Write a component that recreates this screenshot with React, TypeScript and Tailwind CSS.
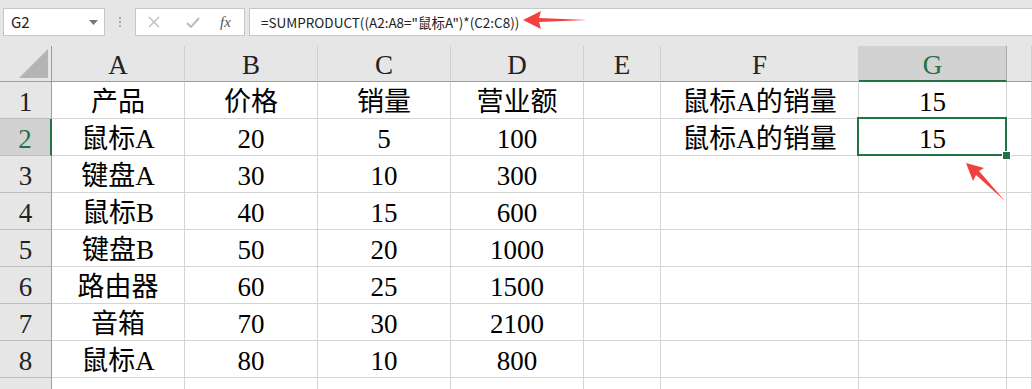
import React from 'react';

const cols = ['A', 'B', 'C', 'D', 'E', 'F', 'G', ''];

const rows: string[][] = [
  ['产品', '价格', '销量', '营业额', '', '鼠标A的销量', '15', ''],
  ['鼠标A', '20', '5', '100', '', '鼠标A的销量', '15', ''],
  ['键盘A', '30', '10', '300', '', '', '', ''],
  ['鼠标B', '40', '15', '600', '', '', '', ''],
  ['键盘B', '50', '20', '1000', '', '', '', ''],
  ['路由器', '60', '25', '1500', '', '', '', ''],
  ['音箱', '70', '30', '2100', '', '', '', ''],
  ['鼠标A', '80', '10', '800', '', '', '', ''],
  ['', '', '', '', '', '', '', ''],
];

const cellFont = { fontFamily: '"Liberation Serif", "Noto Sans CJK SC", serif' };

function FormulaBar() {
  return (
    <div className="flex h-[46px] items-start bg-[#e6e6e6] pt-[8px]">
      <div className="ml-[3px] flex h-[28px] w-[102px] items-center justify-between border border-[#c6c6c6] bg-white pl-[7px] pr-[6px]">
        <span className="text-[15px] text-[#222]" style={{ fontFamily: '"Noto Sans CJK SC", sans-serif' }}>G2</span>
        <svg width="9" height="5" viewBox="0 0 9 5"><path d="M0 0h9L4.5 5z" fill="#777" /></svg>
      </div>
      <div className="flex h-[28px] w-[30px] flex-col items-center justify-center gap-[2px]">
        <span className="h-[2px] w-[2px] bg-[#aaa]" />
        <span className="h-[2px] w-[2px] bg-[#aaa]" />
        <span className="h-[2px] w-[2px] bg-[#aaa]" />
      </div>
      <div className="flex h-[28px] w-[110px] items-center border border-[#c6c6c6] bg-white">
        <svg className="ml-[12px]" width="12" height="12" viewBox="0 0 12 12">
          <path d="M1 1l10 10M11 1L1 11" stroke="#bdbdbd" strokeWidth="1.4" />
        </svg>
        <svg className="ml-[26px]" width="14" height="11" viewBox="0 0 14 11">
          <path d="M1 6l4 4 8-9" stroke="#bdbdbd" strokeWidth="2" fill="none" />
        </svg>
        <span className="ml-[20px] text-[15px] italic text-[#555]" style={{ fontFamily: '"Liberation Serif", serif' }}>fx</span>
      </div>
      <div className="ml-[4px] flex h-[28px] flex-1 items-center border border-r-0 border-[#c6c6c6] bg-white pl-[11px]">
        <span className="text-[13.5px] text-[#222]" style={{ fontFamily: '"Noto Sans CJK SC", sans-serif' }}>
          =SUMPRODUCT((A2:A8="鼠标A")*(C2:C8))
        </span>
      </div>
    </div>
  );
}

export default function App() {
  return (
    <div className="relative h-[389px] w-[1032px] overflow-hidden bg-white">
      <FormulaBar />
      <div className="grid grid-cols-[52px_133px_133px_133px_133px_77px_198px_148px_1fr] grid-rows-[36px_repeat(9,37px)]" style={cellFont}>
        {/* corner */}
        <div className="flex items-end justify-end border-r border-b border-[#9e9e9e] bg-[#e6e6e6] pr-[3px] pb-[3px]">
          <svg width="29" height="29" viewBox="0 0 29 29"><path d="M29 0v29H0z" fill="#b4b4b4" /></svg>
        </div>
        {cols.map((c, k) => (
          <div
            key={k}
            className={
              c === 'G'
                ? 'flex items-center justify-center border-r border-b-2 border-r-[#ababab] border-b-[#217346] bg-[#d2d2d2] pt-[4px] text-[27px] leading-none text-[#217346]'
                : 'flex items-center justify-center border-r border-b border-r-[#d0d0d0] border-b-[#9e9e9e] bg-[#e6e6e6] pt-[4px] text-[27px] leading-none text-[#222]'
            }
          >
            {c}
          </div>
        ))}
        {rows.map((r, i) => (
          <React.Fragment key={i}>
            <div
              className={
                i === 1
                  ? 'flex items-center justify-center border-r-2 border-b border-r-[#217346] border-b-[#bdbdbd] bg-[#d2d2d2] pt-[4px] text-[27px] leading-none text-[#217346]'
                  : 'flex items-center justify-center border-r border-b border-r-[#9e9e9e] border-b-[#bdbdbd] bg-[#e6e6e6] pt-[4px] text-[27px] leading-none text-[#222]'
              }
            >
              {i < 8 ? i + 1 : ''}
            </div>
            {r.map((v, j) => (
              <div
                key={j}
                className={
                  i === 1 && j === 6
                    ? 'relative z-10 flex items-center justify-center border-r border-b border-[#d4d4d4] pt-[4px] text-[27px] leading-none text-black'
                    : 'relative flex items-center justify-center border-r border-b border-[#d4d4d4] pt-[4px] text-[27px] leading-none text-black'
                }
              >
                {v}
                {i === 1 && j === 6 && (
                  <>
                    <div className="absolute -top-[2px] -left-[2px] -right-[1px] -bottom-[1px] border-2 border-[#217346]" />
                    <div className="absolute -right-[4px] -bottom-[4px] h-[7px] w-[7px] bg-[#217346] outline outline-1 outline-white" />
                  </>
                )}
              </div>
            ))}
          </React.Fragment>
        ))}
      </div>
      {/* annotation arrows */}
      <svg className="absolute left-[520px] top-[9px]" width="70" height="22" viewBox="0 0 70 22">
        <path d="M3 11L21 2L19 9L67 11L19 13L21 20Z" fill="#f2403e" />
      </svg>
      <svg className="absolute left-[962px] top-[160px]" width="46" height="44" viewBox="0 0 46 44">
        <path d="M4 3L22 8L17 11L43 41L14 15L11 21Z" fill="#f2403e" />
      </svg>
    </div>
  );
}
